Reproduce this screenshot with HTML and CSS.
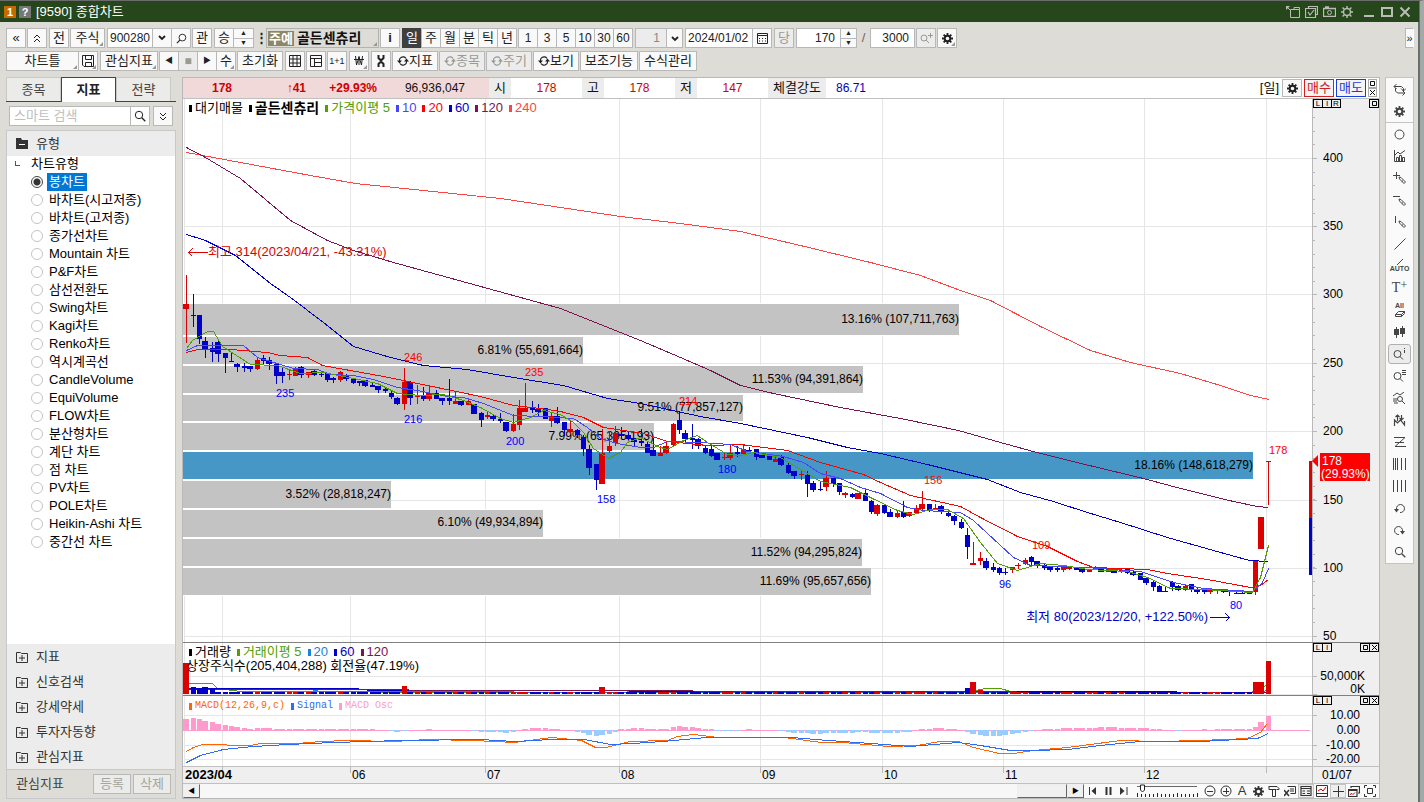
FILE: index.html
```html
<!DOCTYPE html>
<html lang="ko">
<head>
	<meta charset="utf-8">
	<meta name="viewport" content="width=device-width, initial-scale=1.0">
	<title>[9590] 종합차트</title>
	<link rel="stylesheet" href="styles.css">
</head>
<body>
	<!-- icon sprite -->
	<svg class="sprite" aria-hidden="true">
		<symbol id="gear" viewBox="0 0 12 12"><circle cx="6" cy="6" r="3" fill="none" stroke="currentColor" stroke-width="2"/><path d="M6 0v3M6 9v3M0 6h3M9 6h3M1.8 1.8l2 2M8.2 8.2l2 2M10.2 1.8l-2 2M3.8 8.2l-2 2" stroke="currentColor" stroke-width="2" fill="none"/></symbol>
		<symbol id="gear-thin" viewBox="0 0 12 12"><circle cx="6" cy="6" r="3.5" fill="none" stroke="currentColor" stroke-width="1.4"/><path d="M6 0v2M6 10v2M0 6h2M10 6h2M1.6 1.6l1.6 1.6M8.8 8.8l1.6 1.6M10.4 1.6L8.8 3.2M3.2 8.8l-1.6 1.6" stroke="currentColor" stroke-width="1.4"/></symbol>
		<symbol id="chev" viewBox="0 0 8 6"><path d="M1 1l3 3 3-3" fill="none" stroke="currentColor" stroke-width="1.8"/></symbol>
		<symbol id="lens" viewBox="0 0 12 12"><circle cx="5" cy="5" r="3.7" fill="none" stroke="currentColor"/><path d="M7.8 7.8L11.3 11.3" stroke="currentColor" stroke-width="1.3"/></symbol>
		<symbol id="lens-l" viewBox="0 0 12 12"><circle cx="7" cy="5" r="3.7" fill="none" stroke="currentColor"/><path d="M4.2 7.8L1 11" stroke="currentColor" stroke-width="1.3"/></symbol>
		<symbol id="cycle" viewBox="0 0 12 12"><path d="M3 8.500a3.600 3.600 0 0 0 5 1M9 3.500a3.600 3.600 0 0 0-5-1M2.500 7V5a3 3 0 0 1 1.500-2.500M9.500 5v2A3 3 0 0 1 8 9.500" fill="none" stroke="currentColor" stroke-width="1.200"/><path d="M0 5.500h5L2.500 8.500zM7 6.500h5L9.500 3.500z" fill="currentColor"/></symbol>
		<symbol id="pen" viewBox="0 0 8 8"><path d="M1 1l2 .5 4.500 4.500-1.500 1.500L1.500 3zM5 4.500L3.800 5.700" fill="none" stroke="currentColor"/></symbol>
		<symbol id="fold" viewBox="0 0 12 12"><path d="M.5 1.500h4l1 1h6v9H.5z" fill="none" stroke="currentColor"/><path d="M3 7h6M6 4v6" stroke="currentColor"/></symbol>
		<symbol id="disk" viewBox="0 0 12 12"><path d="M.5.5h11v11H2L.5 10zM3.500.5v4h6v-4M3.500 11.500v-4h6v4" fill="none" stroke="currentColor"/></symbol>
		<symbol id="box" viewBox="0 0 5 5"><path d="M.5.500h4v4h-4z" fill="none" stroke="currentColor"/></symbol>
		<symbol id="ex" viewBox="0 0 5 5"><path d="M0 0l5 5M5 0L0 5" stroke="currentColor"/></symbol>
	</svg>

	<div class="window">
		<header class="titlebar">
			<span class="badge badge-num">1</span><span class="badge badge-help">?</span>
			<h1>[9590] 종합차트</h1>
			<div class="win-btns">
				<button aria-label="분리"><svg width="14" height="12" viewBox="0 0 14 12"><path d="M4.500 3.500h9v8h-9zM8 1.500h5.500v2M8 1.500v2M1 1l4 4" fill="none" stroke="currentColor"/><path d="M0 0h4L0 4z" fill="currentColor"/></svg></button>
				<button aria-label="복사"><svg width="13" height="12" viewBox="0 0 13 12"><path d="M3.500 2.500v-2h9v8h-2M.5 2.500h10v9H.5zM3 6l2 3 4-5" fill="none" stroke="currentColor" stroke-width="1.200"/></svg></button>
				<button aria-label="캡처"><svg width="13" height="11" viewBox="0 0 13 11"><path d="M.5 2.500h12v8H.5zM2 1h4" fill="none" stroke="currentColor" stroke-width="1.300"/><circle cx="6.500" cy="6.500" r="2" fill="none" stroke="currentColor"/></svg></button>
				<button aria-label="설정"><svg width="12" height="12"><use href="#gear-thin"/></svg></button>
				<button class="big" aria-label="최소화"><svg width="12" height="12"><path d="M1 10h10" stroke="currentColor" stroke-width="2"/></svg></button>
				<button class="big" aria-label="최대화"><svg width="12" height="12"><path d="M1 2h10v8H1z" fill="none" stroke="currentColor" stroke-width="2"/></svg></button>
				<button class="big" aria-label="닫기"><svg width="12" height="12"><path d="M1.500 1.500l9 9M10.500 1.500l-9 9" stroke="currentColor" stroke-width="2"/></svg></button>
			</div>
		</header>

		<nav class="toolbar">
			<div class="row">
				<button class="btn w20">«</button>
				<button class="btn w20"><svg width="8" height="9" viewBox="0 0 8 9"><path d="M1 4l3-3 3 3M1 8l3-3 3 3" fill="none" stroke="currentColor"/></svg></button>
				<button class="btn w20 sp">전</button>
				<button class="btn w35 corner">주식</button>
				<div class="group sp">
					<input class="field w46" value="900280" aria-label="종목코드">
					<button class="btn w20" aria-label="목록"><svg width="8" height="6"><use href="#chev"/></svg></button>
					<button class="btn w20" aria-label="검색"><svg width="11" height="11"><use href="#lens-l"/></svg></button>
				</div>
				<button class="btn w20">관</button>
				<div class="group sp">
					<button class="btn w20">승</button>
					<div class="spin"><button aria-label="위">▲</button><button aria-label="아래">▼</button></div>
				</div>
				<span class="dots">⋮</span>
				<button class="stock corner"><span>주예</span><b>골든센츄리</b></button>
				<button class="btn w20"><b>i</b></button>
				<div class="group sp">
					<button class="btn w20 on">일</button><button class="btn w20">주</button><button class="btn w20">월</button><button class="btn w20">분</button><button class="btn w20">틱</button><button class="btn w20">년</button>
				</div>
				<div class="group num">
					<button class="btn w20">1</button><button class="btn w20">3</button><button class="btn w20">5</button><button class="btn w20">10</button><button class="btn w20">30</button><button class="btn w20">60</button>
				</div>
				<div class="group sp select">
					<select aria-label="분틱"><option>1</option></select>
					<span><svg width="8" height="6"><use href="#chev"/></svg></span>
				</div>
				<div class="group sp">
					<input class="field w68" value="2024/01/02" aria-label="날짜">
					<button class="btn w20" aria-label="달력"><svg width="11" height="11" viewBox="0 0 11 11"><path d="M.5.5h10v10H.5zM1 2.500h9" fill="none" stroke="currentColor"/><path d="M2 5.500h7M2 8h7" stroke="currentColor" stroke-dasharray="1 2"/></svg></button>
				</div>
				<button class="btn w20 off sp">당</button>
				<div class="group sp">
					<input class="field right w45" value="170" aria-label="봉 개수">
					<div class="spin small"><button aria-label="증가">▲</button><button aria-label="감소">▼</button></div>
				</div>
				<span class="slash">/</span>
				<input class="field right w45" value="3000" aria-label="전체 개수">
				<button class="btn w20 off" aria-label="추가조회"><svg width="13" height="11" viewBox="0 0 13 11"><circle cx="4" cy="5" r="3" fill="none" stroke="currentColor"/><path d="M6 7l3 3M10.500 0v5M8 2.500h5" stroke="currentColor"/></svg></button>
				<button class="btn w20 corner" aria-label="환경설정"><svg width="11" height="11"><use href="#gear"/></svg></button>
				<button class="btn more">»</button>
			</div>
			<div class="row">
				<div class="group">
					<button class="btn w73 corner">차트틀</button>
					<button class="btn w20 corner" aria-label="저장"><svg width="12" height="12"><use href="#disk"/></svg></button>
				</div>
				<button class="btn w58 corner sp">관심지표</button>
				<div class="group tiny">
					<button class="btn w20">◀</button><button class="btn w20 off">■</button><button class="btn w20">▶</button><button class="btn w20 corner txt">수</button>
				</div>
				<button class="btn w46">초기화</button>
				<button class="btn w20 sp" aria-label="격자"><svg width="12" height="12"><path d="M.5.500h11v11H.5zM0 4h12M0 8h12M4 0v12M8 0v12" fill="none" stroke="currentColor"/></svg></button>
				<button class="btn w20" aria-label="분할"><svg width="12" height="12"><path d="M.5.5h11v11H.5zM0 3.500h12M4.500 4v8M5 7.500h7" fill="none" stroke="currentColor"/></svg></button>
				<button class="btn w20 mini">1+1</button>
				<button class="btn w20 corner sp" aria-label="원화"><svg width="10" height="10" viewBox="0 0 10 10"><path d="M1.500 0l1 9L5 1l2.500 8 1-9M5 0v9M0 3.500h10" fill="none" stroke="currentColor"/></svg></button>
				<button class="btn w20 sp" aria-label="도구"><svg width="8" height="12" viewBox="0 0 8 12"><path d="M1.500 0v3L4 5.500 6.500 3V0M1.500 12V9L4 6.500 6.500 9v3M4 4v4" fill="none" stroke="currentColor" stroke-width="2"/></svg></button>
				<button class="btn w46"><svg width="12" height="12"><use href="#cycle"/></svg>지표</button>
				<button class="btn w46 off"><svg width="12" height="12"><use href="#cycle"/></svg>종목</button>
				<button class="btn w46 off"><svg width="12" height="12"><use href="#cycle"/></svg>주기</button>
				<button class="btn w46"><svg width="12" height="12"><use href="#cycle"/></svg>보기</button>
				<button class="btn w58">보조기능</button>
				<button class="btn w58">수식관리</button>
			</div>
		</nav>

		<div class="content">
			<aside class="side">
				<div class="tabs">
					<button>종목</button><button class="active">지표</button><button>전략</button>
				</div>
				<div class="search">
					<div class="search-box">
						<input placeholder="스마트 검색" aria-label="스마트 검색">
						<button aria-label="검색"><svg width="12" height="12"><use href="#lens"/></svg></button>
					</div>
					<button class="btn w20" aria-label="펼치기"><svg width="8" height="9" viewBox="0 0 8 9"><path d="M1 1l3 3 3-3M1 5l3 3 3-3" fill="none" stroke="currentColor"/></svg></button>
				</div>
				<div class="panel">
					<button class="fold"><svg width="12" height="11" viewBox="0 0 12 11"><path d="M0 0h5l1 2h6v9H0z" fill="currentColor"/><path d="M3 6.500h6" stroke="#fff"/></svg>유형</button>
					<div class="tree">
						<p><i></i>차트유형</p>
						<label><input type="radio" name="kind" checked><span>봉차트</span></label>
						<label><input type="radio" name="kind"><span>바차트(시고저종)</span></label>
						<label><input type="radio" name="kind"><span>바차트(고저종)</span></label>
						<label><input type="radio" name="kind"><span>종가선차트</span></label>
						<label><input type="radio" name="kind"><span>Mountain 차트</span></label>
						<label><input type="radio" name="kind"><span>P&amp;F차트</span></label>
						<label><input type="radio" name="kind"><span>삼선전환도</span></label>
						<label><input type="radio" name="kind"><span>Swing차트</span></label>
						<label><input type="radio" name="kind"><span>Kagi차트</span></label>
						<label><input type="radio" name="kind"><span>Renko차트</span></label>
						<label><input type="radio" name="kind"><span>역시계곡선</span></label>
						<label><input type="radio" name="kind"><span>CandleVolume</span></label>
						<label><input type="radio" name="kind"><span>EquiVolume</span></label>
						<label><input type="radio" name="kind"><span>FLOW차트</span></label>
						<label><input type="radio" name="kind"><span>분산형차트</span></label>
						<label><input type="radio" name="kind"><span>계단 차트</span></label>
						<label><input type="radio" name="kind"><span>점 차트</span></label>
						<label><input type="radio" name="kind"><span>PV차트</span></label>
						<label><input type="radio" name="kind"><span>POLE차트</span></label>
						<label><input type="radio" name="kind"><span>Heikin-Ashi 차트</span></label>
						<label><input type="radio" name="kind"><span>중간선 차트</span></label>
					</div>
					<button class="fold"><svg width="12" height="12"><use href="#fold"/></svg>지표</button>
					<button class="fold"><svg width="12" height="12"><use href="#fold"/></svg>신호검색</button>
					<button class="fold"><svg width="12" height="12"><use href="#fold"/></svg>강세약세</button>
					<button class="fold"><svg width="12" height="12"><use href="#fold"/></svg>투자자동향</button>
					<button class="fold"><svg width="12" height="12"><use href="#fold"/></svg>관심지표</button>
					<div class="fav"><span>관심지표</span><button class="btn">등록</button><button class="btn">삭제</button></div>
				</div>
			</aside>

			<main class="chart">
				<div class="quote">
					<div class="now"><b class="c1">178</b><b class="c2">↑41</b><b class="c3">+29.93%</b><span class="c4">96,936,047</span></div>
					<span class="key">시</span><span class="val">178</span>
					<span class="key">고</span><span class="val">178</span>
					<span class="key">저</span><span class="val">147</span>
					<span class="key wide">체결강도</span><span class="val blue">86.71</span>
					<div class="quote-right">
						<span>[일]</span>
						<button class="btn w20" aria-label="설정"><svg width="11" height="11"><use href="#gear"/></svg></button>
						<button class="order buy">매수</button>
						<button class="order sell">매도</button>
						<div class="stack"><button aria-label="확대"><svg width="5" height="5"><use href="#box"/></svg></button><button aria-label="닫기"><svg width="5" height="5"><use href="#ex"/></svg></button></div>
					</div>
				</div>
				<section class="pane price">
					<svg id="price"></svg>
					<div class="legend"><span>대기매물</span><b>골든센츄리</b><span class="ma5">가격이평 5</span><span class="ma10">10</span><span class="ma20">20</span><span class="ma60">60</span><span class="ma120">120</span><span class="ma240">240</span></div>
					<div class="lir"><button>L</button><button>I</button><button>R</button><button class="end" aria-label="확대"><svg width="5" height="5"><use href="#box"/></svg></button></div>
				</section>
				<section class="pane volume">
					<svg id="volume"></svg>
					<div class="legend"><span>거래량</span><span class="ma5">거래이평 5</span><span class="v20">20</span><span class="ma60">60</span><span class="ma120">120</span></div>
					<div class="note">상장주식수(205,404,288) 회전율(47.19%)</div>
					<div class="lir"><button>L</button><button>I</button><button class="end" aria-label="확대"><svg width="5" height="5"><use href="#box"/></svg></button><button aria-label="닫기"><svg width="5" height="5"><use href="#ex"/></svg></button></div>
				</section>
				<section class="pane macd">
					<svg id="macd"></svg>
					<div class="legend mono"><span class="m1">MACD(12,26,9,c)</span><span class="m2">Signal</span><span class="m3">MACD Osc</span></div>
					<div class="lir"><button>L</button><button>I</button><button class="end" aria-label="확대"><svg width="5" height="5"><use href="#box"/></svg></button><button aria-label="닫기"><svg width="5" height="5"><use href="#ex"/></svg></button></div>
				</section>
				<section class="dates"><svg id="dates"></svg></section>
				<footer class="scroll">
					<button class="sbtn">◀</button>
					<div class="track"><div class="thumb"></div></div>
					<button class="sbtn">▶</button>
					<div class="play">
						<button aria-label="처음"><svg width="9" height="8"><path d="M.5 0v8" stroke="currentColor"/><path d="M7 0v8L2.500 4z" fill="currentColor"/></svg></button>
						<button aria-label="정지"><svg width="7" height="8"><path d="M1.500 0v8M5.500 0v8" stroke="currentColor" stroke-width="2"/></svg></button>
						<button aria-label="끝"><svg width="9" height="8"><path d="M8 0v8" stroke="currentColor"/><path d="M1 0v8l4.500-4z" fill="currentColor"/></svg></button>
					</div>
					<svg class="ruler" width="62" height="14"><path d="M0 2.500h60" stroke="#666"/><path d="M0 11.500h61" stroke="#222" stroke-width="3" stroke-dasharray="1 3"/><path d="M.5 9v4M20.500 9v4M40.500 9v4M60.500 9v4" stroke="#222"/><path d="M3.500 1h4v5l-2 2-2-2z" fill="#fff" stroke="#222"/></svg>
					<div class="icons">
						<button aria-label="축소"><svg width="12" height="12"><circle cx="6" cy="6" r="5" fill="none" stroke="currentColor"/><path d="M3 6.500h6" stroke="currentColor"/></svg></button>
						<button aria-label="확대"><svg width="12" height="12"><circle cx="6" cy="6" r="5" fill="none" stroke="currentColor"/><path d="M3 6.500h6M6.500 3v6" stroke="currentColor"/></svg></button>
						<button>A</button>
						<button aria-label="설정"><svg width="11" height="11"><use href="#gear"/></svg></button>
						<button aria-label="도구"><svg width="12" height="12"><path d="M1 1.500h8l2 2v1H8.500M1 1v3.500h3M4.500 4v7.500h3V4M4 4.500h4" fill="none" stroke="currentColor"/></svg></button>
						<button aria-label="표"><svg width="12" height="12"><path d="M3.500 1.500h8v7h-5M6 4h4M6 6h4" fill="none" stroke="currentColor"/><path d="M0 5l5 6M5 5l-5 6" stroke="currentColor" stroke-width="1.500"/></svg></button>
						<button class="sel" aria-label="목록"><svg width="12" height="12"><path d="M1 1.500h10v9H1zM1 3.500h10M2.500 6h2.500M2.500 8.500h2.500M7 6h3M7 8.500h3" fill="none" stroke="currentColor" stroke-width="1.200"/></svg></button>
						<button aria-label="차트"><svg width="12" height="12"><path d="M.5.5h11v11H.5zM0 8.500h12" fill="none" stroke="currentColor"/><path d="M2 6l3-2 2 2 3-4" fill="none" stroke="#c00"/></svg></button>
						<button class="sel" aria-label="십자선"><svg width="12" height="12"><path d="M1 6.500h11M6.500 1v11" stroke="currentColor"/></svg></button>
						<button aria-label="창"><svg width="12" height="12"><path d="M3 3V1.500h8.500V8H10M.5 4.500H9v7H.5zM.5 5.500H9" fill="none" stroke="currentColor" stroke-width="1.200"/><path d="M2 9.500l2-1 1 1 2-2" fill="none" stroke="#c00"/></svg></button>
						<button aria-label="전체화면"><svg width="12" height="12"><path d="M3.500 3.500h5v5h-5zM.5 3V.5H3M9 .5h2.500V3M.5 9v2.500H3M9 11.500h2.500V9" fill="none" stroke="currentColor"/></svg></button>
					</div>
				</footer>
			</main>

			<nav class="rail">
				<button aria-label="새로고침"><svg width="13" height="13"><path d="M1 3.500h7.500l2 2V8M8 5.500l2.500 2.500L13 5.500M3.500 1L1 3.500 3.500 6M2.500 5v3l2 2H12M9.500 7.500L12 10l-2.500 2.500" fill="none" stroke="currentColor"/></svg></button>
				<button class="line" aria-label="설정"><svg width="11" height="11"><use href="#gear"/></svg></button>
				<button aria-label="원"><svg width="11" height="11"><circle cx="5.500" cy="5.500" r="4.500" fill="none" stroke="currentColor"/></svg></button>
				<button aria-label="지표"><svg width="12" height="12"><path d="M.5 0v11.500H11M2.500 11V7.500h2V11M5.500 11V5.500h2V11M8.500 11V7.500h2V11M1 5l3-3 2 2 5-3.500" fill="none" stroke="currentColor"/></svg></button>
				<button aria-label="십자"><svg width="13" height="13"><path d="M0 3.500h7M3.500 0v7" stroke="currentColor"/><use href="#pen" x="5" y="4" width="8" height="8"/></svg></button>
				<button aria-label="수평선"><svg width="13" height="13"><path d="M0 2.500h7" stroke="currentColor"/><use href="#pen" x="5" y="4" width="8" height="8"/></svg></button>
				<button aria-label="수직선"><svg width="13" height="13"><path d="M2.500 0v7" stroke="currentColor"/><use href="#pen" x="5" y="4" width="8" height="8"/></svg></button>
				<button aria-label="추세선"><svg width="12" height="12"><path d="M.5 11.500l11-11" stroke="currentColor"/></svg></button>
				<button class="two"><svg width="8" height="6"><path d="M1 6l6-6" stroke="currentColor"/></svg>AUTO</button>
				<button class="tee">T<sup>+</sup></button>
				<button class="two">All<svg width="10" height="8"><path d="M.5 4.500l3-3h6v2l-3 3h-6zM.5 4.500h6v2M6.500 4.500l3-3" fill="none" stroke="currentColor"/></svg></button>
				<button aria-label="봉"><svg width="12" height="12"><path d="M2.500 1v11M8.500 0v11" stroke="currentColor"/><path d="M0 3h5v6H0zM6 2h5v6H6z" fill="currentColor"/></svg></button>
				<button class="sel" aria-label="정보"><svg width="13" height="12"><circle cx="4.500" cy="6" r="3.500" fill="none" stroke="currentColor"/><path d="M7 8.500l3 3M11.500 0v1M11.500 2v3" stroke="currentColor"/></svg></button>
				<button aria-label="목록검색"><svg width="13" height="12"><circle cx="4.500" cy="6" r="3.500" fill="none" stroke="currentColor"/><path d="M7 8.500l3 3M9 .5h4M9 2.500h4M9 4.500h4" stroke="currentColor"/></svg></button>
				<button aria-label="차트검색"><svg width="13" height="12"><circle cx="7" cy="7" r="2.500" fill="none" stroke="currentColor"/><path d="M9 9l3 3M0 4l4-3 3 2 4-3M0 7h4M0 9h4M1 11h4" fill="none" stroke="currentColor"/></svg></button>
				<button aria-label="화살표"><svg width="13" height="13"><path d="M1.500 12V6l3 3 3-3 4 5V7M4.500 7V1M2.500 3l2-2 2 2M8.500 1v5M6.500 4l2 2 2-2" fill="none" stroke="currentColor" stroke-width="1.200"/></svg></button>
				<button aria-label="Z"><svg width="12" height="12"><path d="M0 1.500h11L1 10.500h11M1 6.500h9" fill="none" stroke="currentColor"/></svg></button>
				<button aria-label="피보나치"><svg width="13" height="12"><path d="M.5 0v12M2.500 0v12M4.500 0v12M8.500 0v12M12.500 0v12" stroke="currentColor"/></svg></button>
				<button aria-label="시간대"><svg width="13" height="12"><path d="M.5 0v12M4.500 0v12M8.500 0v12M12.500 0v12" stroke="currentColor"/></svg></button>
				<button aria-label="실행취소"><svg width="11" height="11"><path d="M2.500 6A4 4 0 1 1 6 9.500" fill="none" stroke="currentColor"/><path d="M0 6h5l-2.500 3.500z" fill="currentColor"/></svg></button>
				<button aria-label="다시실행"><svg width="11" height="11"><path d="M8.500 6A4 4 0 1 0 5 9.500" fill="none" stroke="currentColor"/><path d="M6 6h5l-2.500 3.500z" fill="currentColor"/></svg></button>
				<button aria-label="돋보기"><svg width="12" height="12"><use href="#lens"/></svg></button>
			</nav>
		</div>
	</div>
	<script src="script.js"></script>
</body>
</html>
```

FILE: styles.css
```css
* {
	box-sizing: border-box;
}

html, body {
	margin: 0;
	height: 100%;
}

body {
	background: #dddcd7;
	color: #222;
	font-family: "Liberation Sans", "Noto Sans CJK KR", sans-serif;
	font-size: 13px;
	line-height: 16px;
}

button, input, select {
	margin: 0;
	padding: 0;
	font: inherit;
	color: inherit;
	border: 0;
	border-radius: 0;
	background: none;
	white-space: nowrap;
}

button {
	display: flex;
	align-items: center;
	justify-content: center;
}

svg {
	flex: none;
	display: block;
}

.sprite {
	position: absolute;
	width: 0;
	height: 0;
}

.window {
	display: flex;
	flex-direction: column;
	height: 100vh;
	min-height: 700px;
	border-top: 1px solid #6b6b6b;
	border-right: 4px solid #a3a9a6;
	box-shadow: inset -2px 0 0 #66706c;
}

/* title bar */
.titlebar {
	display: flex;
	align-items: center;
	flex: none;
	gap: 3px;
	height: 21px;
	margin-right: 1px;
	padding-left: 4px;
	background: #26461c;
	color: #fff;
}

.titlebar h1 {
	margin: 0 0 0 2px;
	font-size: 13px;
	font-weight: normal;
}

.badge {
	width: 12px;
	height: 12px;
	font-size: 11px;
	font-weight: bold;
	line-height: 12px;
	text-align: center;
}

.badge-num {
	background: #c66a00;
}

.badge-help {
	background: #777;
}

.win-btns {
	display: flex;
	gap: 5px;
	margin-left: auto;
	padding-right: 8px;
	color: #b9bdb5;
}

.win-btns .big {
	margin-left: 1px;
}

.win-btns .big:nth-child(5) {
	margin-left: 5px;
}

/* toolbar */
.toolbar {
	display: flex;
	flex-direction: column;
	flex: none;
	gap: 3px;
	padding: 6px 6px 6px 6px;
}

.row {
	display: flex;
	align-items: center;
	gap: 1px;
	height: 20px;
}

.row .sp {
	margin-left: 1px;
}

.group {
	display: flex;
}

.group > * + * {
	margin-left: -1px;
}

.btn {
	position: relative;
	flex: none;
	height: 20px;
	border: 1px solid #b8b8b8;
	background: #f9f9f9;
	color: #222;
}

.btn.on {
	background: #3f3f3f;
	border-color: #3f3f3f;
	color: #fff;
}

.btn.off {
	background: #ececec;
	color: #9a9a92;
}

.corner {
	position: relative;
}

.corner::after {
	content: "";
	position: absolute;
	right: 1px;
	bottom: 1px;
	border: 2px solid transparent;
	border-right-color: #999;
	border-bottom-color: #999;
}

.w20 { width: 20px; }
.w35 { width: 35px; }
.w45 { width: 45px; }
.w46 { width: 46px; }
.w58 { width: 58px; }
.w68 { width: 68px; }
.w73 { width: 73px; }

.field {
	height: 20px;
	border: 1px solid #b8b8b8;
	background: #fff;
	font-size: 12px;
	padding: 0 2px;
}

.field.right {
	text-align: right;
	padding-right: 5px;
}

.num .btn, .select select {
	font-size: 12px;
}

.select {
	position: relative;
}

.select select {
	appearance: none;
	width: 48px;
	height: 20px;
	padding-right: 22px;
	text-align-last: right;
	border: 1px solid #b8b8b8;
	background: #ececec;
	color: #888;
}

.select span {
	position: absolute;
	right: 0;
	top: 0;
	width: 17px;
	height: 20px;
	padding: 7px 4px;
	border: 1px solid #b8b8b8;
	background: #f9f9f9;
	pointer-events: none;
}

.spin {
	display: flex;
	flex-direction: column;
	width: 21px;
	height: 20px;
	border: 1px solid #b8b8b8;
	background: #f9f9f9;
}

.spin.small {
	width: 17px;
}

.spin button {
	flex: 1;
	font-size: 7px;
	line-height: 8px;
}

.spin button + button {
	border-top: 1px solid #b8b8b8;
}

.dots {
	width: 10px;
	text-align: center;
	font-weight: bold;
}

.stock {
	gap: 3px;
	width: 113px;
	height: 20px;
	justify-content: flex-start;
	padding-left: 1px;
	border: 1px solid #b3b3ae;
	background: #dddcd7;
	color: #111;
}

.stock span {
	padding: 0 1px;
	background: #8d8668;
	color: #fff;
	font-weight: bold;
	line-height: 15px;
}

.stock b, .legend b {
	font-size: 14px;
}

.slash {
	width: 11px;
	text-align: center;
	color: #666;
}

.more {
	width: 9px;
	margin-left: auto;
	border-right-color: #fff;
	font-size: 11px;
}

.tiny .btn {
	font-size: 8px;
}

.tiny .off {
	font-size: 12px;
}

.tiny .txt {
	font-size: 13px;
}

.mini {
	font-size: 9px;
}

/* content */
.content {
	display: flex;
	flex: 1;
	min-height: 0;
	padding: 0 6px 3px 6px;
	align-items: stretch;
}

.side {
	display: flex;
	flex-direction: column;
	flex: none;
	width: 170px;
	margin-right: 6px;
}

.tabs {
	display: flex;
	height: 25px;
	border-bottom: 1px solid #444;
}

.tabs button {
	width: 55px;
	border: 1px solid #c8c8c5;
	border-bottom: 0;
	background: #ebebe9;
	color: #444;
}

.tabs .active {
	height: 25px;
	border-color: #444;
	background: #fff;
	color: #222;
	font-weight: bold;
}

.search {
	display: flex;
	gap: 3px;
	padding: 4px 3px;
}

.search-box {
	display: flex;
	flex: none;
	width: 141px;
	height: 20px;
	border: 1px solid #b8b8b8;
	background: #fff;
}

.search-box input {
	flex: 1;
	min-width: 0;
	padding-left: 4px;
}

.search-box input::placeholder {
	color: #c0c0c0;
}

.search-box button {
	width: 19px;
	border-left: 1px solid #b8b8b8;
}

.panel {
	display: flex;
	flex-direction: column;
	flex: 1;
	min-height: 0;
	border: 1px solid #c6c8c9;
	background: #fff;
}

.fold {
	flex: none;
	justify-content: flex-start;
	gap: 8px;
	height: 25px;
	padding-left: 9px;
	background: #ececec;
	color: #333;
}

.tree {
	flex: 1;
	min-height: 0;
	overflow: hidden;
	color: #000;
}

.tree p {
	display: flex;
	gap: 11px;
	height: 17px;
	margin: 0;
	padding-left: 8px;
	line-height: 16px;
}

.tree i {
	width: 5px;
	height: 5px;
	margin-top: 5px;
	border-left: 1px solid #555;
	border-bottom: 1px solid #555;
}

.tree label {
	display: flex;
	align-items: center;
	gap: 4px;
	height: 18px;
	padding-left: 24px;
}

.tree input {
	appearance: none;
	width: 12px;
	height: 12px;
	border: 1px solid #c4c4c4;
	border-radius: 50%;
	background: #fff;
}

.tree input:checked {
	border-color: #444;
	background: radial-gradient(circle, #333 3px, #fff 4px);
}

.tree span {
	padding: 0 2px;
	line-height: 18px;
}

.tree input:checked + span {
	background: #0078d7;
	color: #fff;
}

.fav {
	display: flex;
	flex: none;
	align-items: center;
	gap: 2px;
	height: 29px;
	padding-left: 9px;
	padding-right: 4px;
	border-top: 1px solid #c6c8c9;
	background: #dddcd7;
	color: #444;
}

.fav span {
	flex: 1;
}

.fav .btn {
	width: 38px;
	background: #ebebe9;
	color: #a5a59b;
}

/* chart */
.chart {
	display: flex;
	flex-direction: column;
	flex: 1;
	min-width: 0;
	border: 1px solid #b9b9b9;
	background: #fff;
}

.quote {
	display: flex;
	flex: none;
	align-items: center;
	height: 21px;
	border-bottom: 1px solid #c0c0c0;
	color: #111;
	font-size: 12px;
}

.now {
	display: flex;
	align-items: center;
	width: 306px;
	height: 20px;
	background: #f1d9d9;
}

.now b {
	color: #d00000;
}

.c1 { width: 49px; }
.c2 { width: 74px; }
.c3 { width: 71px; }
.now > * { text-align: right; }
.now .c4 { width: 88px; }

.key {
	width: 22px;
	height: 20px;
	line-height: 19px;
	font-size: 13px;
	text-align: center;
	background: #ececec;
}

.key.wide {
	width: 58px;
}

.val {
	width: 71px;
	text-align: center;
	color: #d00000;
}

.val.blue {
	width: 50px;
	color: #0000c8;
}

.quote-right {
	display: flex;
	align-items: center;
	gap: 2px;
	margin-left: auto;
	padding-right: 2px;
	font-size: 13px;
}

.quote-right .btn, .order {
	height: 18px;
}

.quote-right > span {
	margin-right: 1px;
}

.order {
	width: 30px;
	border: 1px solid;
	background: #f5f3f3;
}

.buy { color: #d02020; }
.sell { color: #1740d8; }

.stack button {
	width: 9px;
	height: 9px;
	border: 1px solid #aaa;
}

.pane {
	position: relative;
	flex: none;
	min-height: 0;
	overflow: hidden;
	border-bottom: 1px solid #808080;
}

.pane > svg, .dates svg {
	width: 100%;
	height: 100%;
}

.price { flex: 1; }
.volume { height: 53px; }
.macd { height: 71px; border-bottom-color: #c0c0c0; }
.dates { flex: none; height: 17px; border-bottom: 1px solid #c0c0c0; }

.legend {
	position: absolute;
	left: 6px;
	top: 1px;
	display: flex;
	gap: 6px;
	color: #000;
}

.legend > * {
	display: flex;
	align-items: center;
	gap: 3px;
}

.legend > *::before {
	content: "";
	width: 3px;
	height: 7px;
	background: currentColor;
}

.legend.mono {
	font-family: "Liberation Mono", monospace;
	font-size: 10px;
	line-height: 18px;
}

.note {
	position: absolute;
	left: 3px;
	top: 15px;
	color: #000;
}

.ma5 { color: #4fa000; }
.ma10 { color: #4646ff; }
.ma20 { color: #ff0000; }
.ma60 { color: #0000c8; }
.ma120 { color: #7a1450; }
.ma240 { color: #ff4444; }
.v20 { color: #1485d8; }
.m1 { color: #ff6400; }
.m2 { color: #2d6cf6; }
.m3 { color: #ff9acc; }

.lir {
	position: absolute;
	top: 0;
	right: 1px;
	display: flex;
	width: 65px;
}

.lir button {
	width: 10px;
	height: 9px;
	margin-right: -1px;
	border: 1px solid #000;
	color: #000;
	font-size: 8px;
	line-height: 7px;
}

.lir .end {
	margin-left: auto;
}

/* svg text */
.t12 { font-size: 12px; }
.t11 { font-size: 11px; }
.t13 { font-size: 13px; }

/* bottom scroll bar */
.scroll {
	display: flex;
	flex: none;
	align-items: center;
	height: 14px;
	background: #fafafa;
	color: #333;
}

.sbtn {
	width: 17px;
	height: 14px;
	border: 1px solid;
	border-color: #eee #666 #666 #eee;
	background: #f0f0f0;
	color: #000;
	font-size: 7px;
}

.track {
	flex: 1;
	height: 14px;
	background: #f7f7f7;
}

.thumb {
	width: 50px;
	height: 14px;
	margin-left: auto;
	border: 1px solid;
	border-color: #eee #666 #666 #eee;
	background: #f0f0f0;
}

.play {
	display: flex;
	justify-content: space-between;
	width: 39px;
	margin: 0 9px 0 5px;
}

.ruler {
	margin-right: 3px;
}

.icons {
	display: flex;
	padding-right: 1px;
}

.icons button {
	width: 16px;
	height: 14px;
}

.icons .sel {
	border: 1px solid #c4c4c4;
	background: #eee;
}

/* drawing tools */
.rail {
	flex: none;
	align-self: flex-start;
	width: 29px;
	margin-left: 5px;
	border: 1px solid #c4c4c4;
	background: #fafafa;
	color: #444;
}

.rail button {
	width: 27px;
	height: 22px;
}

.rail .line {
	height: 23px;
	border-bottom: 1px solid #c4c4c4;
}

.rail .sel {
	width: 23px;
	height: 20px;
	margin: 1px 2px;
	border: 1px solid #b0b0b0;
	border-radius: 3px;
	background: #ececec;
}

.rail .two {
	flex-direction: column;
	font-size: 7px;
	font-weight: bold;
	line-height: 8px;
}

.rail .tee {
	font: 14px "Liberation Serif", serif;
}

.rail sup {
	margin-bottom: 6px;
	font-size: 12px;
	line-height: 8px;
}
```

FILE: script.js
```js
// chart space: x 183..1312, every pane keeps its own y range
var LEFT = 183, SPAN = 1129, AXIS = 66;
var NS = 'http://www.w3.org/2000/svg';

var RED = '#dc0000', BLUE = '#0000c8';

// color, high, body top, body bottom, low
var candles = [
	'r275,304,309,343', 'b294,315,316,327', 'b315,315,339,344', 'b337,341,349,358', 'b342,348,352,362', 'b341,342,354,362', 'b353,353,358,373', 'b352,361,362,362', 'b363,364,367,372', 'b363,366,368,372',
	'b366,366,369,372', 'r357,360,369,370', 'b355,358,361,364', 'b357,360,364,370', 'b363,364,376,384', 'b368,372,376,383', 'r370,374,375,380', 'r367,369,376,376', 'b366,367,375,378', 'r372,372,375,378',
	'b370,371,375,376', 'b373,374,375,377', 'b373,373,380,382', 'b377,378,380,383', 'r371,372,380,382', 'b374,375,379,381', 'b379,379,383,384', 'b381,381,383,386', 'b380,380,386,387', 'b383,385,387,387',
	'b386,386,390,393', 'b387,389,391,393', 'b390,393,397,399', 'b397,398,404,405', 'r368,382,404,410', 'b381,382,398,405', 'r385,395,397,404', 'b387,395,399,401', 'r385,393,399,401', 'b390,393,399,399',
	'b398,398,401,405', 'b379,398,401,405', 'r392,401,404,404', 'b401,401,405,406', 'r399,401,405,405', 'b404,404,414,414', 'b412,413,420,427', 'r412,415,417,419', 'b415,416,419,421', 'b413,419,421,423',
	'b422,422,431,432', 'r414,424,431,432', 'r400,408,425,430', 'r383,408,412,412', 'b401,408,410,413', 'b404,409,412,416', 'b408,408,419,419', 'r413,416,421,427', 'b407,416,423,424', 'b422,422,430,436',
	'r420,429,432,434', 'b429,430,435,438', 'b435,437,449,456', 'b445,449,468,475', 'b464,464,480,490', 'r429,453,484,484', 'r431,446,451,453', 'r426,433,443,446', 'b427,434,436,439', 'b431,435,439,440',
	'b438,438,442,447', 'b429,441,443,446', 'b441,444,453,453', 'b438,450,456,456', 'r446,453,456,456', 'r442,446,453,454', 'r423,424,445,446', 'b411,420,430,434', 'b430,433,439,443', 'b424,438,440,449',
	'b438,439,446,449', 'b445,448,453,454', 'b446,449,456,457', 'b453,453,460,460', 'r453,457,458,460', 'r445,453,458,460', 'b446,452,454,457', 'r445,449,454,455', 'b447,450,451,452', 'b449,449,457,460',
	'b453,455,458,458', 'b455,456,460,460', 'r457,459,462,462', 'b455,457,465,466', 'b463,465,473,474', 'b471,471,476,479', 'r471,474,475,480', 'b471,475,484,497', 'b481,483,490,492', 'b482,489,490,491',
	'r471,478,487,491', 'b478,478,484,487', 'b483,483,492,495', 'r492,493,495,498', 'b493,494,497,498', 'r493,493,499,499', 'b490,493,501,501', 'b500,501,512,514', 'r504,505,514,516', 'b505,505,513,514',
	'b509,512,517,517', 'r511,513,517,518', 'b501,512,517,518', 'r512,512,516,517', 'r505,508,513,514', 'r491,504,509,510', 'b504,504,511,512', 'r504,508,509,510', 'b505,506,512,514', 'b512,513,516,517',
	'b515,516,521,525', 'b519,522,528,529', 'b528,535,547,559', 'r542,563,565,565', 'r552,558,561,565', 'b558,561,568,570', 'b563,567,570,572', 'b567,568,573,575', 'b568,572,573,575', 'r567,567,570,573',
	'r563,565,566,569', 'r558,560,564,565', 'b556,557,562,565', 'b561,561,565,568', 'b564,565,568,570', 'b566,567,570,572', 'b566,568,570,572', 'r566,567,570,572', 'r567,567,569,570', 'b567,567,570,570',
	'b568,569,572,573', 'r569,569,572,572', 'r566,567,569,570', 'b567,568,572,572', 'r568,569,572,572', 'b570,570,573,573', 'r569,570,572,573', 'b569,569,573,574', 'b571,572,575,576', 'b573,573,580,580',
	'b577,578,583,585', 'b580,582,587,591', 'b585,586,592,592', 'b586,591,592,592', 'b581,582,587,591', 'b585,586,590,591', 'r584,586,590,591', 'b584,584,590,592', 'b588,589,592,594', 'b588,589,592,594',
	'r589,590,592,594', 'r590,590,591,594', 'b590,591,592,593', 'b590,591,592,596', 'b592,593,594,594', 'b592,593,594,594', 'b592,593,594,594', 'r560,561,592,595', 'r517,517,549,549', 'r461,461,462,505'
];

// moving averages, bottom one first
var averages = [
	['#ff4444', '186,152 240,162 310,175 355,183 423,190 500,198 560,207 620,216 680,223 740,231 800,245 870,262 920,275 960,290 990,300 1040,326 1090,350 1130,362 1180,373 1220,385 1250,395 1269,399'],
	['#7a1450', '186,147 205,157 240,178 265,199 290,220 327,240 353,250 393,262 433,273 560,308 640,340 680,357 710,370 740,385 773,393 840,407 900,418 958,430 1000,442 1040,453 1093,466 1143,478 1180,488 1233,501 1257,506 1268,507'],
	['#0000c8', '186,234 205,240 235,255 270,283 290,297 323,322 353,346 390,357 423,365 467,369 513,377 563,385 607,398 640,403 700,416 740,423 807,437 847,447 880,453 927,464 987,479 1020,492 1053,501 1087,512 1120,522 1167,537 1213,550 1249,560 1268,561'],
	['#ff0000', '186,352 197,349 230,349 267,352 280,355 307,357 322,365 383,376 427,385 480,396 513,405 540,408 560,411 583,417 603,427 643,433 667,441 707,445 740,444 787,450 820,462 863,474 880,482 910,495 960,506 980,517 1017,536 1047,546 1077,561 1093,567 1147,569 1167,573 1207,579 1250,587 1260,585 1268,579'],
	['#4646ff', '186,350 197,345 243,345 257,357 293,368 317,369 330,374 353,375 373,379 397,387 417,390 447,396 463,397 483,403 513,415 540,416 573,418 587,427 600,438 617,443 640,447 653,447 667,441 700,442 730,444 747,451 783,456 803,462 820,473 840,478 860,487 880,493 907,507 923,510 960,512 973,520 1013,557 1030,565 1087,567 1140,571 1173,582 1203,588 1252,591 1262,582 1268,568'],
	['#4fa000', '186,348 192,340 207,331 213,331 222,346 250,364 277,365 300,373 323,372 353,378 377,383 397,393 420,395 443,394 463,400 480,407 500,418 513,422 530,417 543,410 560,414 573,422 583,432 593,448 608,458 620,452 627,442 640,437 657,446 667,449 683,440 697,435 707,442 727,454 740,455 753,452 780,457 800,469 820,481 850,487 870,497 897,510 913,514 930,509 947,509 963,518 980,542 997,563 1017,570 1040,563 1063,565 1087,569 1127,571 1147,577 1170,588 1203,589 1252,592 1260,577 1268,545']
];

// price-by-volume: top, height, right edge, text
var profile = [
	[304, 31, 959, '13.16% (107,711,763)'],
	[337, 27, 583, '6.81% (55,691,664)'],
	[366, 27, 863, '11.53% (94,391,864)'],
	[395, 26, 743, '9.51% (77,857,127)'],
	[423, 27, 654, '7.99% (65,395,193)'],
	[452, 27, 1253, '18.16% (148,618,279)'],
	[481, 27, 391, '3.52% (28,818,247)'],
	[510, 27, 543, '6.10% (49,934,894)'],
	[539, 27, 862, '11.52% (94,295,824)'],
	[568, 27, 871, '11.69% (95,657,656)']
];

var peaks = [
	['246', 404, 361, 'r'], ['235', 525, 376, 'r'], ['214', 679, 405, 'r'], ['156', 924, 484, 'r'], ['109', 1032, 549, 'r'], ['178', 1269, 454, 'r'],
	['235', 276, 397, 'b'], ['216', 404, 423, 'b'], ['200', 506, 445, 'b'], ['158', 597, 503, 'b'], ['180', 718, 473, 'b'], ['96', 999, 588, 'b'], ['80', 1230, 609, 'b']
];

var months = [[222, ''], [350, '06'], [485, '07'], [619, '08'], [760, '09'], [882, '10'], [1003, '11'], [1144, '12'], [1266, '']];

// oscillator heights: first index, values
var osc = [
	[0, [12, 13, 12, 10, 9, 7, 6, 5, 4, 3, 2, 3, 3, 3, 2, 2, 2, 2, 2, 2, 2, 2, 2, 2, 2, 2, 2, 2, 2, 2]],
	[32, [-1, -2, -1]], [38, [2]],
	[45, [-1, -2, -2, -2, -2, -3, -2]], [53, [2, 3, 3, 3, 2, 2]],
	[61, [-2, -3, -5, -6, -5, -4, -2]], [68, [2, 2, 3, 3, 2, 2, 2, 2, 4, 5, 4, 4, 3, 2, 2]],
	[83, [-1, -1, -1, -1]], [88, [2]],
	[93, [-1, -2, -3, -3, -3, -4, -4, -3, -3, -3, -3, -3, -2, -2, -3, -3, -3, -3, -3, -2, -2]],
	[115, [2, 2, 3, 3, 2, 2]], [122, [-2, -4, -5, -6, -6, -6, -5, -4, -3, -2, -1]],
	[134, [2, 2, 2, 3, 3, 3, 3, 3, 3, 4, 4, 4, 3, 3, 3, 3, 3, 2, 2]], [155, [-1]], [159, [2]],
	[161, [2, 2, 2, 2, 2, 2, 4, 9, 15]]
];

var macdLines = [
	['#ff6400', '186,751 193,747 202,744 250,745 260,743 297,743 320,741 347,740 393,741 427,739 473,740 514,742 551,737 581,740 595,747 606,747 629,741 667,740 677,736 693,734 717,737 784,737 821,742 843,742 888,746 917,745 939,741 958,741 973,747 999,753 1013,753 1033,750 1067,747 1120,740 1157,741 1200,740 1247,738 1260,732 1266,724'],
	['#2d6cf6', '186,762 200,755 223,749 253,746 287,744 333,742 400,740 480,739 514,741 551,739 584,739 610,744 632,743 662,741 706,737 791,737 828,740 884,744 910,746 958,742 980,745 1010,750 1033,750 1067,749 1100,745 1140,741 1200,741 1257,738 1268,733']
];

var volLines = [
	['#4fa000', '186,683 212,683 217,688 240,691 500,692 600,692 606,690 622,690 640,692 970,691 985,688 1000,688 1010,691 1250,692 1262,688 1268,682'],
	['#1485d8', '186,688 310,689 320,691 700,692 1255,692 1268,690'],
	['#0000c8', '186,688 355,688 370,690 555,690 700,691 1176,691'],
	['#7a1450', '186,689 625,690 760,691 1268,692']
];

function pane(id, top, height) {
	var svg = document.getElementById(id);
	svg.innerHTML = '';
	var w = svg.clientWidth, h = svg.clientHeight, plot = w - AXIS - 1;
	var p = {
		w: w, h: h, plot: plot,
		x: function (v) { return Math.round((v - LEFT) / SPAN * plot); },
		y: function (v) { return Math.round((v - top) / height * h); },
		add: function (tag, attrs, text) {
			var el = document.createElementNS(NS, tag);
			for (var k in attrs) el.setAttribute(k, attrs[k]);
			if (text) el.textContent = text;
			svg.appendChild(el);
			return el;
		},
		rect: function (x, y, rw, rh, fill) {
			p.add('rect', { x: x, y: y, width: rw, height: rh, fill: fill, 'shape-rendering': 'crispEdges' });
		},
		// one bar of day n, a 1px gap to the next day
		bar: function (n, y, rh, fill) {
			var x = p.x(cx(n)), bw = Math.max(1, p.x(cx(n + 1)) - x - 1);
			p.rect(x - Math.floor(bw / 2), y, bw, rh, fill);
		},
		text: function (s, x, y, cls, fill, anchor) {
			p.add('text', { x: x, y: y, 'class': cls, fill: fill, 'text-anchor': anchor || 'start' }, s);
		},
		line: function (color, pts) {
			var d = pts.split(' ').map(function (s) {
				var a = s.split(',');
				return (p.x(+a[0]) + 0.5) + ',' + (p.y(+a[1]) + 0.5);
			}).join(' ');
			p.add('polyline', { points: d, fill: 'none', stroke: color, 'shape-rendering': 'crispEdges' });
		}
	};
	// axis column
	p.rect(plot, 0, w - plot, h, '#efefef');
	p.rect(plot, 0, 1, h, '#b9b9b9');
	return p;
}

function grid(p, rows) {
	p.rect(1, 0, 1, p.h, '#e6e6e6');
	months.forEach(function (m) { p.rect(p.x(m[0]), 0, 1, p.h, '#e6e6e6'); });
	rows.forEach(function (y) {
		p.rect(1, p.y(y), p.plot - 1, 1, '#e6e6e6');
		p.rect(p.plot, p.y(y), 5, 1, '#b9b9b9');
	});
}

function cx(i) {
	return 186.2 + i * 6.4;
}

function drawPrice() {
	var p = pane('price', 99, 543), i;
	var rows = [158, 226, 294, 363, 431, 500, 568, 636];
	grid(p, rows);
	for (i = 0; i < 38; i++) p.rect(p.plot, p.y(117 + i * 13.65), 3, 1, '#b9b9b9');
	rows.forEach(function (y, n) { p.text(String(400 - n * 50), p.plot + 11, p.y(y + 4), 't12', '#000'); });

	profile.forEach(function (b) {
		p.rect(0, p.y(b[0]) - 1, p.x(b[2]), p.y(b[0] + b[1]) - p.y(b[0]) + 2, '#fff');
		p.rect(0, p.y(b[0]), p.x(b[2]), p.y(b[0] + b[1]) - p.y(b[0]), b[2] > 1000 ? '#4797c6' : '#c3c3c3');
	});
	profile.forEach(function (b) {
		p.text(b[3], p.x(b[2]), p.y(b[0] + b[1] / 2) + 3, 't12', '#000', 'end');
	});

	candles.forEach(function (c, n) {
		var v = c.slice(1).split(',').map(Number), color = c[0] === 'r' ? RED : BLUE;
		p.rect(p.x(cx(n)), p.y(v[0]), 1, Math.max(1, p.y(v[3]) - p.y(v[0])), color);
		p.bar(n, p.y(v[1]), Math.max(1, p.y(v[2]) - p.y(v[1])), color);
	});
	averages.forEach(function (a) { p.line(a[0], a[1]); });
	peaks.forEach(function (k) { p.text(k[0], p.x(k[1]), p.y(k[2]), 't11', k[3] === 'r' ? '#ff0000' : '#0000ff'); });

	p.text('최고 314(2023/04/21, -43.31%)', p.x(208), p.y(256), 't13', RED);
	p.line(RED, '188,252 207,252');
	p.line(RED, '192,248 188,252 192,256');
	p.text('최저 80(2023/12/20, +122.50%)', p.x(1208), p.y(621), 't13', BLUE, 'end');
	p.line(BLUE, '1209,617 1229,617');
	p.line(BLUE, '1225,613 1229,617 1225,621');

	// day range and last price tag
	p.rect(p.plot - 3, p.y(461), 3, p.y(518) - p.y(461), RED);
	p.rect(p.plot - 3, p.y(518), 3, p.y(575) - p.y(518), BLUE);
	var y = p.y(461), x = p.plot;
	p.add('path', { d: 'M' + x + ' ' + y + 'l6 -6v12z', fill: '#ff0000' });
	p.rect(x + 8, y - 8, 50, 28, '#ff0000');
	p.text('178', x + 10, y + 4, 't12', '#fff');
	p.text('(29.93%)', x + 9, y + 17, 't12', '#fff');
}

function drawVolume() {
	var p = pane('volume', 643, 52);
	grid(p, [676, 694]);
	var tall = { 0: 663, 1: 687, 2: 688, 3: 687, 4: 689, 34: 686, 65: 687, 122: 688, 123: 682, 124: 690, 167: 682, 168: 682, 169: 661 };
	volLines.forEach(function (a) { p.line(a[0], a[1]); });
	candles.forEach(function (c, n) {
		var top = tall[n] || 692;
		p.bar(n, p.y(top), p.y(694) - p.y(top), c[0] === 'r' ? RED : BLUE);
	});
	p.text('50,000K', p.w - 14, p.y(680), 't12', '#000', 'end');
	p.text('0K', p.w - 14, p.y(693), 't12', '#000', 'end');
}

function drawMacd() {
	var p = pane('macd', 696, 70);
	grid(p, [715, 745, 759]);
	p.rect(3, p.y(730), p.plot - 5, 1, '#ff9acc');
	osc.forEach(function (o) {
		o[1].forEach(function (v, n) {
			var y = p.y(730);
			p.bar(o[0] + n, v > 0 ? y + 1 - v : y, Math.abs(v), v > 0 ? '#ff9acc' : '#99ccff');
		});
	});
	macdLines.forEach(function (a) { p.line(a[0], a[1]); });
	[['10.00', 719], ['0.00', 734], ['-10.00', 749], ['-20.00', 763]].forEach(function (t) {
		p.text(t[0], p.w - 19, p.y(t[1]), 't12', '#000', 'end');
	});
}

function drawDates() {
	var p = pane('dates', 767, 16);
	p.rect(0, 0, p.w, p.h, '#efefef');
	p.rect(p.plot, 0, 1, p.h, '#b9b9b9');
	months.forEach(function (m) {
		p.rect(p.x(m[0]), 0, 1, 6, '#b9b9b9');
		p.text(m[1], p.x(m[0]) + 2, 12, 't12', '#000');
	});
	p.add('text', { x: 2, y: 12, 'class': 't13', 'font-weight': 'bold' }, '2023/04');
	p.text('01/07', p.plot + 10, 12, 't12', '#000');
}

function draw() {
	drawPrice();
	drawVolume();
	drawMacd();
	drawDates();
}

draw();
window.addEventListener('resize', draw);
```
